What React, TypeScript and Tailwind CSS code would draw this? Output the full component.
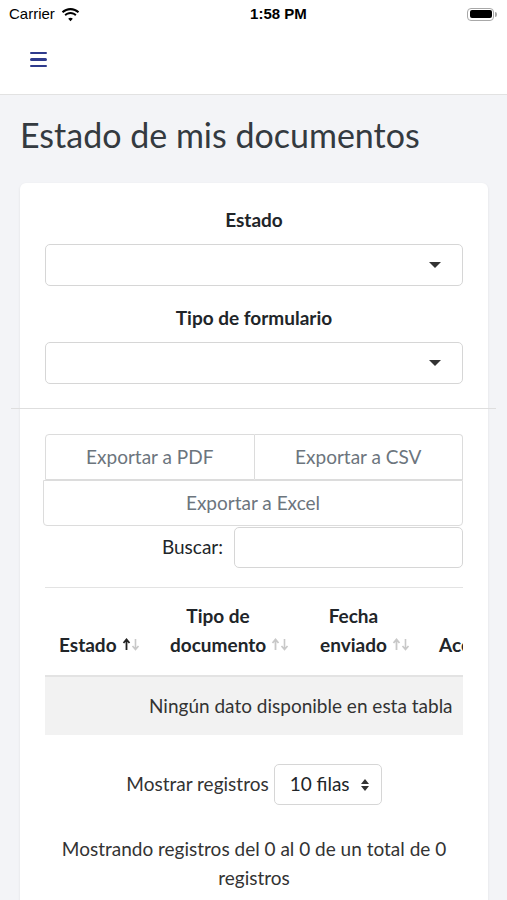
import React from "react";

function Wifi() {
	return (
		<svg width="19" height="14" viewBox="0 0 19 14" className="mt-[1px]">
			<path d="M9.5 2.2c2.8 0 5.4 1.1 7.3 2.9l1.4-1.5C15.9 1.4 12.8 0 9.5 0S3.1 1.4.8 3.6l1.4 1.5C4.1 3.3 6.7 2.2 9.5 2.2z" fill="#000" />
			<path d="M9.5 6.1c1.8 0 3.4.7 4.6 1.8l1.4-1.5C14 4.9 11.8 4 9.5 4S5 4.9 3.5 6.4l1.4 1.5c1.2-1.1 2.8-1.8 4.6-1.8z" fill="#000" />
			<path d="M9.5 9.8c.9 0 1.7.3 2.3.9l-2.3 2.5-2.3-2.5c.6-.6 1.4-.9 2.3-.9z" fill="#000" />
		</svg>
	);
}

function Battery() {
	return (
		<div className="flex items-center">
			<div className="w-[27px] h-[13px] rounded-[4px] border-[1.5px] border-[#a8a8a8] p-[1.5px]">
				<div className="w-full h-full rounded-[2px] bg-black"></div>
			</div>
			<div className="w-[2px] h-[5px] rounded-r-sm bg-[#a8a8a8] ml-[1px]"></div>
		</div>
	);
}

function Caret() {
	return (
		<svg width="12" height="6" viewBox="0 0 12 6">
			<path d="M0 0h12L6 6z" fill="#333" />
		</svg>
	);
}

function SortArrows({ active }: { active?: boolean }) {
	const up = active ? "#222" : "#c8c8c8";
	return (
		<svg width="20" height="13" viewBox="0 0 20 13">
			<path d="M4.5 12V2M1.5 5l3-3.5 3 3.5" stroke={up} strokeWidth="1.8" fill="none" />
			<path d="M13.5 1v10M10.5 8l3 3.5 3-3.5" stroke="#c8c8c8" strokeWidth="1.6" fill="none" />
		</svg>
	);
}

function Select({ label }: { label: string }) {
	return (
		<div className="flex flex-col">
			<div className="text-center font-bold text-[19px] leading-[24px] text-[#212529]">{label}</div>
			<div className="mt-[12px] h-[42px] rounded-[5px] border border-[#d6d6d6] bg-white flex items-center justify-end pr-[21px]">
				<Caret />
			</div>
		</div>
	);
}

function SortHead({ lines, w, active }: { lines: string[]; w: number; active?: boolean }) {
	return (
		<div className="flex items-end pl-[14px] shrink-0" style={{ width: w }}>
			<div className="text-center font-bold text-[19px] leading-[29px] text-[#212529]">
				{lines.map((l) => (
					<div key={l} className="whitespace-nowrap">
						{l}
					</div>
				))}
			</div>
			<div className="ml-[5px] mb-[8px]">
				<SortArrows active={active} />
			</div>
		</div>
	);
}

export default function App() {
	return (
		<div className="w-[507px] h-[900px] overflow-hidden bg-[#f3f4f7] font-['Lato','Liberation_Sans',sans-serif] text-[#212529]">
			{/* status bar */}
			<div className="relative h-[28px] bg-white flex items-center px-[9px] font-['Liberation_Sans','Inter',sans-serif]">
				<div className="flex items-center gap-[6px]">
					<span className="text-[15px] text-black">Carrier</span>
					<Wifi />
				</div>
				<div className="flex-1 text-center text-[15px] font-bold text-black pl-[10px]">1:58 PM</div>
				<div className="pr-[1px]">
					<Battery />
				</div>
			</div>

			{/* navbar */}
			<div className="h-[67px] bg-white border-b border-[#e2e2e2] flex items-center pl-[30px]">
				<div className="flex flex-col gap-[4px] w-[17px] mt-[-3px]">
					<div className="h-[2.5px] bg-[#2e3a8c] rounded-full"></div>
					<div className="h-[2.5px] bg-[#2e3a8c] rounded-full"></div>
					<div className="h-[2.5px] bg-[#2e3a8c] rounded-full"></div>
				</div>
			</div>

			{/* content */}
			<div className="pl-[20px] pr-[19px] pt-[20px]">
				<h1 className="text-[34px] leading-[40px] font-normal text-[#343a40]">Estado de mis documentos</h1>

				<div className="mt-[28px] bg-white rounded-[6px] shadow-[0_1px_3px_rgba(0,0,0,0.08)] px-[25px] pt-[25px] pb-[40px]">
					<div className="flex flex-col gap-[20px]">
						<Select label="Estado" />
						<Select label="Tipo de formulario" />
					</div>

					<div className="-ml-[34px] -mr-[33px] mt-[24px] border-t border-[#dedede]"></div>

					{/* export buttons */}
					<div className="mt-[25px] text-[19px] text-[#6c757d]">
						<div className="flex h-[46px]">
							<div className="flex-1 flex items-center justify-center border border-[#dcdcdc] rounded-tl-[4px]">Exportar a PDF</div>
							<div className="flex-1 flex items-center justify-center border border-l-0 border-[#dcdcdc] rounded-tr-[4px]">Exportar a CSV</div>
						</div>
						<div className="-ml-[2px] h-[46px] flex items-center justify-center border border-[#dcdcdc] rounded-b-[4px]">Exportar a Excel</div>
					</div>

					{/* search */}
					<div className="flex items-center justify-end mt-[1px] text-[19px]">
						<span className="mr-[11px]">Buscar:</span>
						<div className="w-[229px] h-[41px] border border-[#d6d6d6] rounded-[5px] bg-white"></div>
					</div>

					<div className="mt-[19px] border-t border-[#e3e3e3]"></div>

					{/* table */}
					<div className="overflow-hidden mt-[14px]">
						<div className="w-[505px]">
							<div className="flex h-[75px] pb-[16px] items-end border-b-2 border-[#e3e3e3]">
								<SortHead lines={["Estado"]} w={111} active />
								<SortHead lines={["Tipo de", "documento"]} w={150} />
								<SortHead lines={["Fecha", "enviado"]} w={120} />
								<div className="pl-[13px] font-bold text-[19px] leading-[29px] whitespace-nowrap">Acciones</div>
							</div>
							<div className="h-[58px] bg-[#f2f2f2] flex items-center pl-[104px] text-[19px] text-[#333]">
								Ningún dato disponible en esta tabla
							</div>
						</div>
					</div>

					{/* length */}
					<div className="mt-[29px] flex items-center justify-center text-[19px] text-[#333]">
						<span className="mr-[5px]">Mostrar registros</span>
						<div className="h-[41px] w-[108px] border border-[#d6d6d6] rounded-[5px] flex items-center pl-[15px] gap-[11px] text-[#212529]">
							<span>10 filas</span>
							<svg width="8" height="12" viewBox="0 0 8 12">
								<path d="M4 0l4 5H0z M0 7h8l-4 5z" fill="#333" />
							</svg>
						</div>
					</div>

					<p className="mt-[29px] text-center text-[19px] leading-[29px] text-[#333] px-[2px]">
						Mostrando registros del 0 al 0 de un total de 0 registros
					</p>
				</div>
			</div>
		</div>
	);
}
